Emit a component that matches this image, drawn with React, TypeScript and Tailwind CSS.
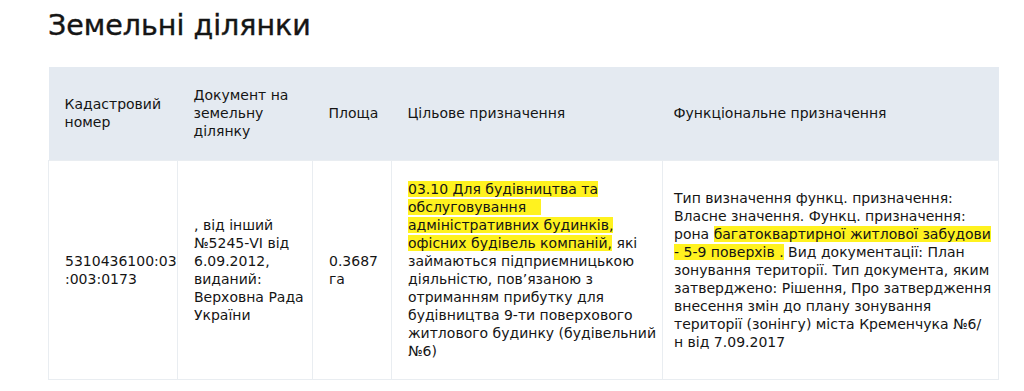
import React from 'react';

const font = { fontFamily: '"DejaVu Sans", "Noto Sans", sans-serif' };

const Mark: React.FC<{ children: React.ReactNode; className?: string }> = ({ children, className = '' }) => (
  <span className={`bg-[#fff21f] [box-decoration-break:clone] ${className}`}>{children}</span>
);

export default function App() {
  return (
    <div className="min-h-[391px] bg-white text-[#151515]" style={font}>
      <div className="pl-12 pr-[27px] pt-[7px]">
        <h1 className="text-[28.5px] leading-[38px] font-normal [-webkit-text-stroke:0.4px_#151515]">
          Земельні ділянки
        </h1>

        <table className="mt-[22px] w-[950px] table-fixed border-collapse text-[14px] leading-[18px]">
          <colgroup>
            <col className="w-[129px]" />
            <col className="w-[135px]" />
            <col className="w-[79px]" />
            <col className="w-[271px]" />
            <col className="w-[336px]" />
          </colgroup>
          <thead>
            <tr className="h-[93px] bg-[#e4eaf1] text-left align-middle">
              <th className="pl-4 pr-2 font-normal">Кадастровий<br />номер</th>
              <th className="pl-4 pr-2 font-normal">Документ на<br />земельну<br />ділянку</th>
              <th className="pl-4 pr-2 font-normal">Площа</th>
              <th className="pl-4 pr-2 font-normal">Цільове призначення</th>
              <th className="pl-[11px] pr-2 font-normal">Функціональне призначення</th>
            </tr>
          </thead>
          <tbody className="whitespace-nowrap">
            <tr className="h-[218px] align-middle">
              <td className="border border-[#e9edf1] pl-4 pr-1">5310436100:03<br />:003:0173</td>
              <td className="border border-[#e9edf1] pl-4 pr-1">
                , від інший<br />№5245-VI від<br />6.09.2012,<br />виданий:<br />Верховна Рада<br />України
              </td>
              <td className="border border-[#e9edf1] pl-4 pr-1">0.3687<br />га</td>
              <td className="border border-[#e9edf1] pl-4 pr-1 py-[19px]">
                <Mark>03.10 Для будівництва та</Mark>
                <br />
                <Mark className="pr-[15px]">обслуговування</Mark>
                <br />
                <Mark>адміністративних будинків,</Mark>
                <br />
                <Mark>офісних будівель компаній,</Mark> які
                <br />
                займаються підприємницькою
                <br />
                діяльністю, пов’язаною з
                <br />
                отриманням прибутку для
                <br />
                будівництва 9-ти поверхового
                <br />
                житлового будинку (будівельний
                <br />
                №6)
              </td>
              <td className="border border-[#e9edf1] pl-[11px] pr-1">
                Тип визначення функц. призначення:
                <br />
                Власне значення. Функц. призначення:
                <br />
                рона <Mark>багатоквартирної житлової забудови</Mark>
                <br />
                <Mark>- 5-9 поверхів .</Mark> Вид документації: План
                <br />
                зонування території. Тип документа, яким
                <br />
                затверджено: Рішення, Про затвердження
                <br />
                внесення змін до плану зонування
                <br />
                території (зонінгу) міста Кременчука №6/
                <br />
                н від 7.09.2017
              </td>
            </tr>
          </tbody>
        </table>
      </div>
    </div>
  );
}
